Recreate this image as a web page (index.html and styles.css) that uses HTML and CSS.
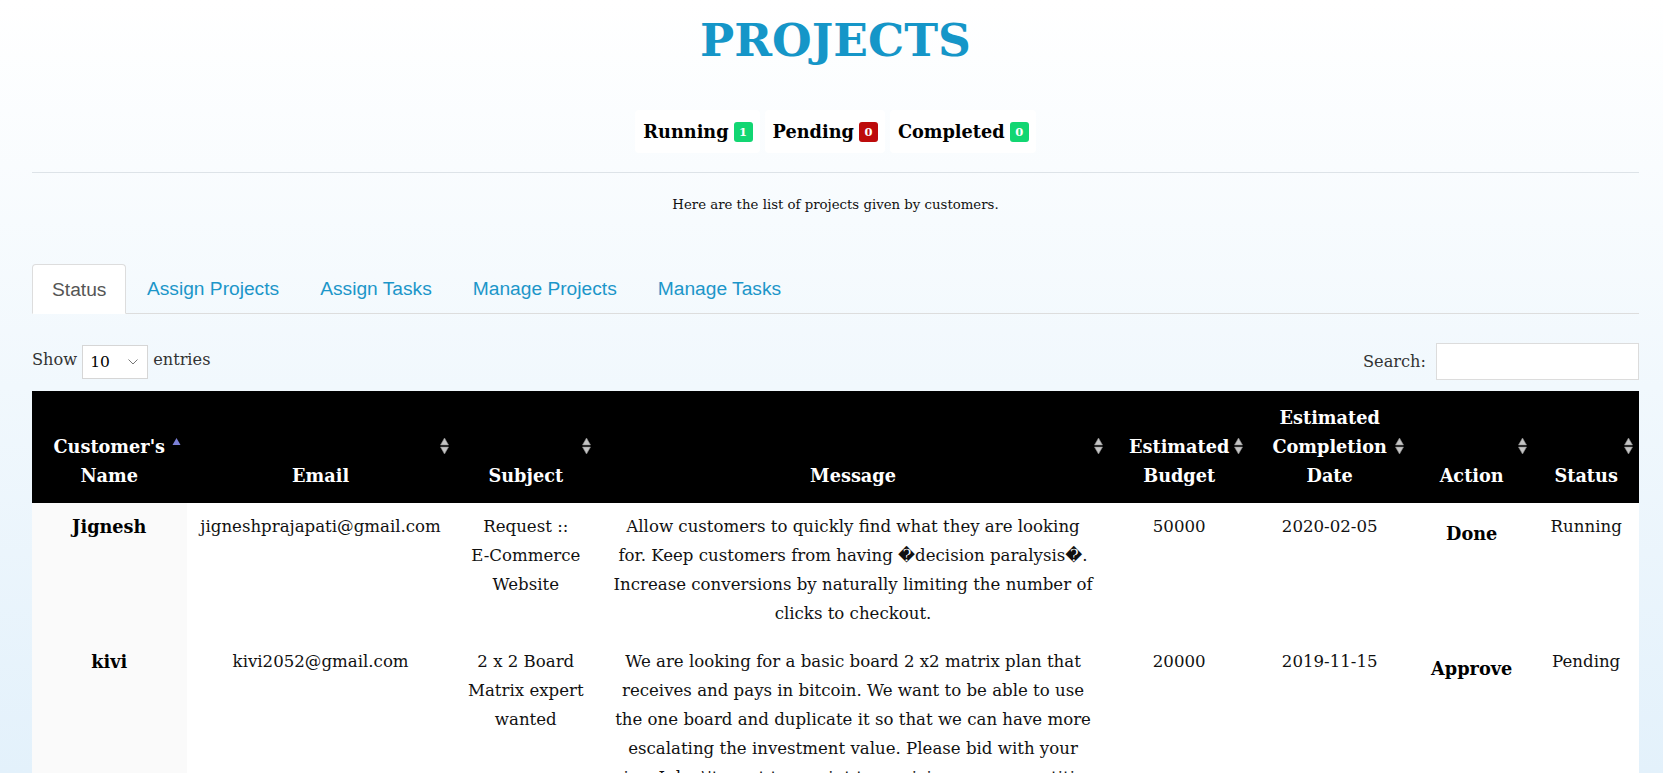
FILE: index.html
```html
<!DOCTYPE html>
<html lang="en">
<head>
<meta charset="utf-8">
<title>Projects</title>
<link rel="stylesheet" href="styles.css">
</head>
<body>
<div class="page">
  <h1 class="title">PROJECTS</h1>
  <div class="stats">
    <div class="stat">Running<span class="badge green">1</span></div>
    <div class="stat">Pending<span class="badge red">0</span></div>
    <div class="stat">Completed<span class="badge green">0</span></div>
  </div>
  <hr class="rule">
  <p class="desc">Here are the list of projects given by customers.</p>
  <ul class="tabs">
    <li class="tab active">Status</li>
    <li class="tab">Assign Projects</li>
    <li class="tab">Assign Tasks</li>
    <li class="tab">Manage Projects</li>
    <li class="tab">Manage Tasks</li>
  </ul>
  <div class="controls">
    <label class="length"><span class="lbl">Show</span><span class="select">10<svg class="chev" viewBox="0 0 10 6"><path d="M0.5 0.5 L5 5 L9.5 0.5" fill="none" stroke="#777" stroke-width="1"/></svg></span><span class="lbl">entries</span></label>
    <label class="search">Search: <input type="text" class="search-input"></label>
  </div>
  <table class="projects">
    <colgroup>
      <col class="c-name"><col class="c-email"><col class="c-subject"><col class="c-message"><col class="c-budget"><col class="c-date"><col class="c-action"><col class="c-status">
    </colgroup>
    <thead>
      <tr>
        <th>Customer's Name<svg class="sort" viewBox="0 0 9 18"><path d="M4.5 1 L8.5 8 L0.5 8 Z" fill="#7b80d6"/></svg></th>
        <th>Email<svg class="sort" viewBox="0 0 9 18"><path d="M4.5 1 L8.5 8 L0.5 8 Z" fill="#c4c4c4" stroke="#8d8d8d" stroke-width="0.6"/><path d="M0.5 10 L8.5 10 L4.5 17 Z" fill="#c4c4c4" stroke="#8d8d8d" stroke-width="0.6"/></svg></th>
        <th>Subject<svg class="sort" viewBox="0 0 9 18"><path d="M4.5 1 L8.5 8 L0.5 8 Z" fill="#c4c4c4" stroke="#8d8d8d" stroke-width="0.6"/><path d="M0.5 10 L8.5 10 L4.5 17 Z" fill="#c4c4c4" stroke="#8d8d8d" stroke-width="0.6"/></svg></th>
        <th>Message<svg class="sort" viewBox="0 0 9 18"><path d="M4.5 1 L8.5 8 L0.5 8 Z" fill="#c4c4c4" stroke="#8d8d8d" stroke-width="0.6"/><path d="M0.5 10 L8.5 10 L4.5 17 Z" fill="#c4c4c4" stroke="#8d8d8d" stroke-width="0.6"/></svg></th>
        <th>Estimated Budget<svg class="sort" viewBox="0 0 9 18"><path d="M4.5 1 L8.5 8 L0.5 8 Z" fill="#c4c4c4" stroke="#8d8d8d" stroke-width="0.6"/><path d="M0.5 10 L8.5 10 L4.5 17 Z" fill="#c4c4c4" stroke="#8d8d8d" stroke-width="0.6"/></svg></th>
        <th>Estimated Completion Date<svg class="sort" viewBox="0 0 9 18"><path d="M4.5 1 L8.5 8 L0.5 8 Z" fill="#c4c4c4" stroke="#8d8d8d" stroke-width="0.6"/><path d="M0.5 10 L8.5 10 L4.5 17 Z" fill="#c4c4c4" stroke="#8d8d8d" stroke-width="0.6"/></svg></th>
        <th>Action<svg class="sort" viewBox="0 0 9 18"><path d="M4.5 1 L8.5 8 L0.5 8 Z" fill="#c4c4c4" stroke="#8d8d8d" stroke-width="0.6"/><path d="M0.5 10 L8.5 10 L4.5 17 Z" fill="#c4c4c4" stroke="#8d8d8d" stroke-width="0.6"/></svg></th>
        <th>Status<svg class="sort" viewBox="0 0 9 18"><path d="M4.5 1 L8.5 8 L0.5 8 Z" fill="#c4c4c4" stroke="#8d8d8d" stroke-width="0.6"/><path d="M0.5 10 L8.5 10 L4.5 17 Z" fill="#c4c4c4" stroke="#8d8d8d" stroke-width="0.6"/></svg></th>
      </tr>
    </thead>
    <tbody>
      <tr>
        <td class="sorted">Jignesh</td>
        <td>jigneshprajapati@gmail.com</td>
        <td>Request :: <span class="nowrap">E-Commerce</span> Website</td>
        <td class="message">Allow customers to quickly find what they are looking<br>for. Keep customers from having �decision paralysis�.<br>Increase conversions by naturally limiting the number of<br>clicks to checkout.</td>
        <td>50000</td>
        <td>2020-02-05</td>
        <td class="action"><b>Done</b></td>
        <td>Running</td>
      </tr>
      <tr>
        <td class="sorted">kivi</td>
        <td>kivi2052@gmail.com</td>
        <td>2 x 2 Board Matrix expert wanted</td>
        <td class="message">We are looking for a basic board 2 x2 matrix plan that<br>receives and pays in bitcoin. We want to be able to use<br>the one board and duplicate it so that we can have more<br>escalating the investment value. Please bid with your<br>price. I don\'t want to a point to a pricing war competition.</td>
        <td>20000</td>
        <td>2019-11-15</td>
        <td class="action"><b>Approve</b></td>
        <td>Pending</td>
      </tr>
    </tbody>
  </table>
</div>
</body>
</html>
```

FILE: styles.css
```css
html {
  scrollbar-width: none;
}
html::-webkit-scrollbar {
  display: none;
}
body {
  margin: 0;
  min-height: 100vh;
  font-family: "DejaVu Serif", "Liberation Serif", serif;
  color: #111;
  background: linear-gradient(180deg, #ffffff 0%, #e3f1fb 100%) fixed;
}
.page {
  padding: 0 24px 0 32px;
}
.title {
  margin: 0;
  height: 81px;
  line-height: 81px;
  text-align: center;
  font-size: 45.5px;
  font-weight: bold;
  color: #1596c8;
}
.stats {
  display: flex;
  justify-content: center;
  gap: 5px;
  margin-top: 29px;
}
.stat {
  height: 43px;
  display: flex;
  align-items: center;
  padding: 0 7px 0 8px;
  background: #fff;
  border-radius: 4px;
  font-weight: bold;
  font-size: 17.7px;
  color: #000;
}
.badge {
  display: inline-flex;
  align-items: center;
  justify-content: center;
  height: 20px;
  padding: 0 5.5px;
  margin-left: 5px;
  border-radius: 3px;
  color: #fff;
  font-size: 11.5px;
  font-weight: bold;
}
.green { background: #12d672; }
.red { background: #bd0b0b; }
.rule {
  margin: 19px 0 0;
  border: 0;
  border-top: 1px solid #dde3e8;
}
.desc {
  margin: 22px 0 0;
  line-height: 20px;
  text-align: center;
  font-size: 13.3px;
  color: #111;
}
.tabs {
  list-style: none;
  margin: 49px 0 0;
  padding: 0;
  display: flex;
  border-bottom: 1px solid #dddddd;
}
.tab {
  box-sizing: border-box;
  height: 50px;
  line-height: 49px;
  padding: 0 20.5px;
  margin-bottom: -1px;
  font-family: "Liberation Sans", Arial, sans-serif;
  font-size: 19.2px;
  color: #1c96c9;
}
.tab.active {
  padding: 0 19px;
  background: #fff;
  border: 1px solid #dddddd;
  border-bottom-color: transparent;
  border-radius: 4px 4px 0 0;
  color: #555;
}
.controls {
  display: flex;
  justify-content: space-between;
  align-items: center;
  margin-top: 29px;
  height: 37px;
}
.length, .search {
  display: flex;
  align-items: center;
  gap: 5px;
  font-size: 16.2px;
  color: #333;
}
.lbl {
  margin-bottom: 5px;
}
.search { gap: 10px; }
.select {
  box-sizing: border-box;
  width: 66px;
  height: 34px;
  display: flex;
  align-items: center;
  padding: 0 9px 0 7px;
  background: #fff;
  border: 1px solid #d6d6d6;
  font-size: 15.5px;
  color: #000;
}
.chev {
  width: 10px;
  height: 6px;
  margin-left: auto;
}
.search-input {
  box-sizing: border-box;
  width: 203px;
  height: 37px;
  margin: 0;
  padding: 0;
  border: 1px solid #dcdcdc;
  background: #fff;
}
.projects {
  width: 100%;
  margin-top: 11px;
  border-collapse: collapse;
  table-layout: fixed;
}
.c-name { width: 154.5px; }
.c-email { width: 268.2px; }
.c-subject { width: 142.2px; }
.c-message { width: 512.3px; }
.c-budget { width: 140px; }
.c-date { width: 161px; }
.c-action { width: 123px; }
.c-status { width: 106px; }
.projects th {
  position: relative;
  padding: 12px 10px 13px;
  background: #000;
  color: #fff;
  font-size: 17.7px;
  font-weight: bold;
  line-height: 29px;
  text-align: center;
  vertical-align: bottom;
}
.sort {
  position: absolute;
  right: 6px;
  top: 50%;
  margin-top: -10px;
  width: 9px;
  height: 18px;
}
.projects td {
  padding: 9px 10px 10px;
  background: #fff;
  font-size: 16.6px;
  line-height: 29px;
  text-align: center;
  vertical-align: top;
  color: #111;
}
.projects td.message {
  padding-left: 6px;
  padding-right: 6px;
}
.projects td.sorted {
  background: #fafafa;
  font-weight: bold;
  font-size: 17.7px;
  color: #000;
}
.nowrap {
  white-space: nowrap;
}
.action b {
  display: block;
  margin-top: 7px;
  font-size: 17.7px;
  color: #000;
}
```
